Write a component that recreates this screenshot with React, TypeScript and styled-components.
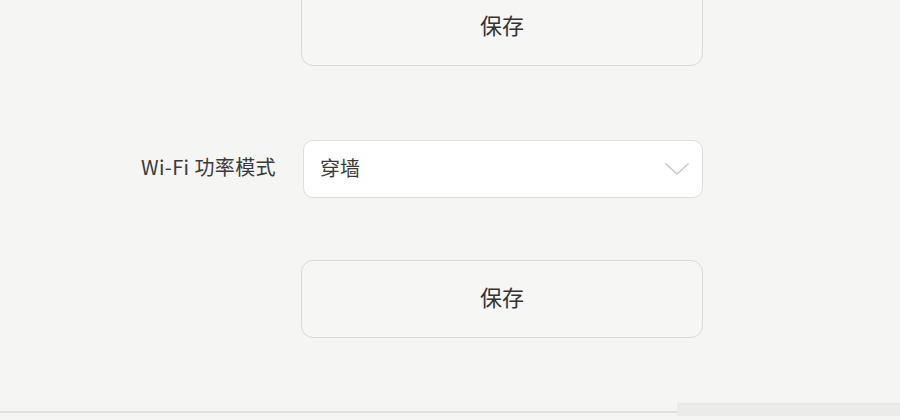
import React from 'react';
import styled, {createGlobalStyle} from 'styled-components';

const GlobalStyle = createGlobalStyle`
  html, body {
    margin: 0;
    padding: 0;
    background: #f5f5f4;
  }
  body {
    font-family: 'Noto Sans CJK SC', 'Noto Sans', sans-serif;
    color: #333333;
  }
`;

const Page = styled.div`
  width: 900px;
  height: 420px;
  overflow: hidden;
  background: #f5f5f4;
  display: flex;
  flex-direction: column;
`;

const Form = styled.div`
  display: grid;
  grid-template-columns: 278px 402px;
  column-gap: 23px;
  align-items: center;
  margin-top: -12px;
`;

const Row = styled.div<{ $gap: number }>`
  display: contents;
  > * {
    margin-top: ${p => p.$gap}px;
  }
`;

const Label = styled.div`
  grid-column: 1;
  text-align: right;
  padding-right: 2px;
  padding-bottom: 6px;
  font-size: 20px;
  color: #3a3a3a;
  letter-spacing: 0.4px;
`;

const SaveButton = styled.button`
  grid-column: 2;
  height: 78px;
  width: 402px;
  border: 1.5px solid #d9d9d8;
  border-radius: 12px;
  background: #f6f6f5;
  font-family: 'Noto Sans CJK SC', sans-serif;
  font-size: 22px;
  color: #333333;
  padding: 0 0 6px;
`;

const Select = styled.div`
  grid-column: 2;
  margin-left: 2px;
  height: 58px;
  width: 400px;
  box-sizing: border-box;
  border: 1.5px solid #dedede;
  border-radius: 10px;
  background: #ffffff;
  display: flex;
  align-items: center;
  justify-content: space-between;
  padding: 0 12px 0 16px;
  font-size: 20px;
  color: #3a3a3a;

  > span {
    padding-bottom: 4px;
  }
`;

const Footer = styled.div`
  margin-top: auto;
  margin-bottom: 4px;
  display: flex;
  align-items: flex-end;
  height: 13px;
`;

const FooterLine = styled.div`
  flex: 0 0 677px;
  height: 2px;
  margin-bottom: 3px;
  background: #dedede;
`;

const FooterBand = styled.div`
  flex: 1;
  height: 13px;
  background: #ebebea;
  border-top: 1px solid #f0f0ef;
`;

const Chevron = () => (
  <svg width="26" height="16" viewBox="0 0 26 16" fill="none">
    <path d="M2 3 L13 13 L24 3" stroke="#c9c9c9" strokeWidth="1.6" strokeLinecap="round" strokeLinejoin="round"/>
  </svg>
);

const App: React.FC = () => {
  return (
    <Page>
      <GlobalStyle/>
      <Form>
        <Row $gap={0}>
          <SaveButton>保存</SaveButton>
        </Row>
        <Row $gap={74}>
          <Label>Wi-Fi 功率模式</Label>
          <Select>
            <span>穿墙</span>
            <Chevron/>
          </Select>
        </Row>
        <Row $gap={62}>
          <SaveButton>保存</SaveButton>
        </Row>
      </Form>
      <Footer>
        <FooterLine/>
        <FooterBand/>
      </Footer>
    </Page>
  );
};

export default App;
